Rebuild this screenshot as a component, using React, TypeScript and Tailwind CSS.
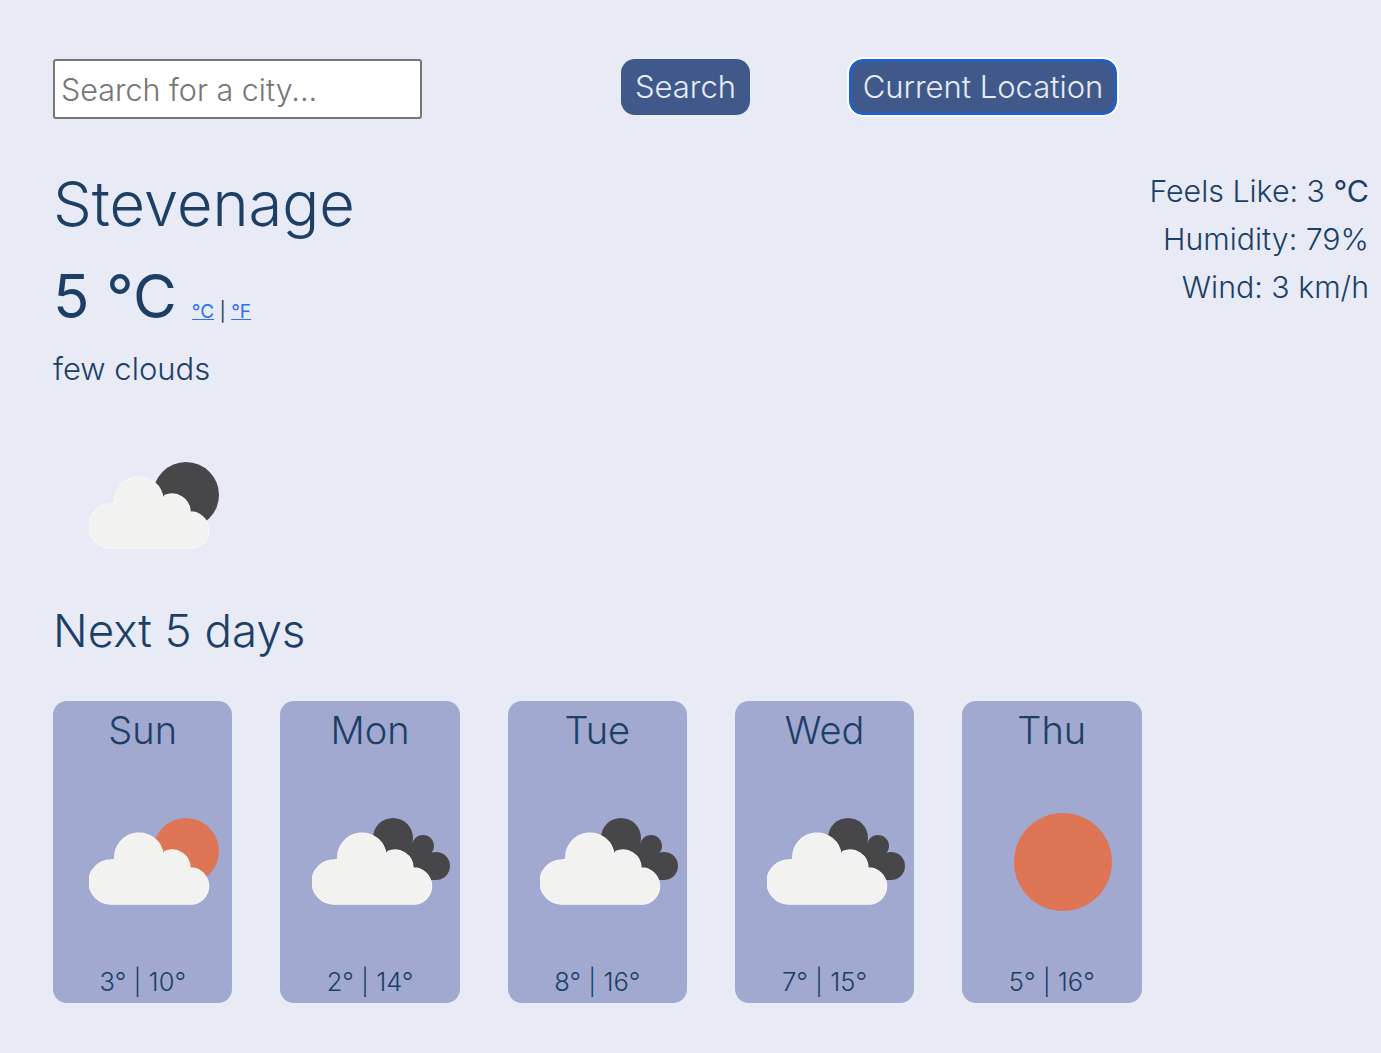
import React from "react";

const cloudPath =
  "M22 75 A22 22 0 0 1 22 31 L26 30.5 A24 24 0 0 1 74 26 L76 22.5 A18 18 0 0 1 101 39 A18 18 0 0 1 102 75 Z";

const Cloud = () => (
  <g>
    <path d={cloudPath} fill="#fafafa" stroke="#fafafa" strokeWidth="1.5" />
    <path d={cloudPath} fill="#f2f2f0" />
  </g>
);

const Sun = ({ fill }: { fill: string }) => <circle cx="97" cy="22" r="33" fill={fill} />;

const DarkCloud = () => (
  <g fill="#47474a">
    <circle cx="81" cy="9" r="20" />
    <circle cx="111" cy="17" r="11" />
    <circle cx="124" cy="37" r="14" />
    <polygon points="81,9 111,17 124,37 124,51 81,51" />
  </g>
);

const WeatherIcon = ({ kind }: { kind: "moon" | "sun-cloud" | "clouds" | "sun" }) => {
  if (kind === "sun") {
    return (
      <svg width="98" height="98" viewBox="0 0 98 98" className="block">
        <circle cx="49" cy="49" r="49" fill="#de7656" />
      </svg>
    );
  }
  return (
    <svg width="140" height="90" viewBox="0 -12 140 90" className="block">
      {kind === "moon" && <Sun fill="#47474a" />}
      {kind === "sun-cloud" && <Sun fill="#de7656" />}
      {kind === "clouds" && <DarkCloud />}
      <Cloud />
    </svg>
  );
};

const days = [
  { d: "Sun", lo: 3, hi: 10, kind: "sun-cloud" as const, pad: "pl-[36px] pt-[63px]" },
  { d: "Mon", lo: 2, hi: 14, kind: "clouds" as const, pad: "pl-[32px] pt-[63px]" },
  { d: "Tue", lo: 8, hi: 16, kind: "clouds" as const, pad: "pl-[32px] pt-[63px]" },
  { d: "Wed", lo: 7, hi: 15, kind: "clouds" as const, pad: "pl-[32px] pt-[63px]" },
  { d: "Thu", lo: 5, hi: 16, kind: "sun" as const, pad: "pl-[52px] pt-[59px]" },
];

export default function App() {
  return (
    <div className="min-h-[1053px] bg-[#e8eaf6] pl-[53px] pr-[12px] pt-[59px] font-['Inter',sans-serif] font-light text-[#1d3f66]">
      <div className="flex items-start">
        <input
          placeholder="Search for a city..."
          className="h-[60px] w-[369px] rounded-[3px] border-2 border-[#767676] bg-white px-[6px] text-[30.5px] font-light placeholder:text-[#757575]"
        />
        <button className="ml-[199px] h-[56px] w-[129px] rounded-[14px] bg-[#3f5a8a] text-[31px] font-light text-[#e8eaf6]">
          Search
        </button>
        <button className="ml-[99px] h-[56px] w-[268px] rounded-[14px] border-[3px] border-[#1f60c4] bg-[#3f5a8a] text-[31px] font-light text-[#e8eaf6] outline-2 outline-white">
          Current Location
        </button>
      </div>

      <div className="mt-[45px] flex items-start justify-between">
        <div>
          <h1 className="text-[61.4px] font-light leading-[80px]">Stevenage</h1>
          <div className="mt-[16px] flex h-[72px] items-end">
            <span className="text-[60px] font-normal leading-[72px]">5 °C</span>
            <span className="mb-[8px] ml-[15px] text-[19px] font-normal leading-[24px]">
              <a className="text-[#2f6ff5] underline">°C</a> | <a className="text-[#2f6ff5] underline">°F</a>
            </span>
          </div>
          <p className="mt-[17px] text-[31px] leading-[40px]">few clouds</p>
        </div>
        <div className="mt-[3px] text-right text-[30.3px] leading-[48px]">
          <div>
            Feels Like: 3 <span className="font-normal">°C</span>
          </div>
          <div>Humidity: 79%</div>
          <div>Wind: 3 km/h</div>
        </div>
      </div>

      <div className="mt-[72px] pl-[36px]">
        <WeatherIcon kind="moon" />
      </div>

      <h2 className="mt-[50px] text-[45.7px] font-light leading-[60px]">Next 5 days</h2>

      <div className="mt-[40px] flex gap-[47.8px]">
        {days.map((x) => (
          <div key={x.d} className="flex h-[302px] w-[179.48px] flex-col rounded-[14px] bg-[#a1a9d0]">
            <div className="pt-[5px] text-center text-[38px] leading-[48px]">{x.d}</div>
            <div className={x.pad}>
              <WeatherIcon kind={x.kind} />
            </div>
            <div className="mt-auto pb-[3px] text-center text-[25.5px] leading-[36px]">
              {x.lo}° | {x.hi}°
            </div>
          </div>
        ))}
      </div>
    </div>
  );
}
